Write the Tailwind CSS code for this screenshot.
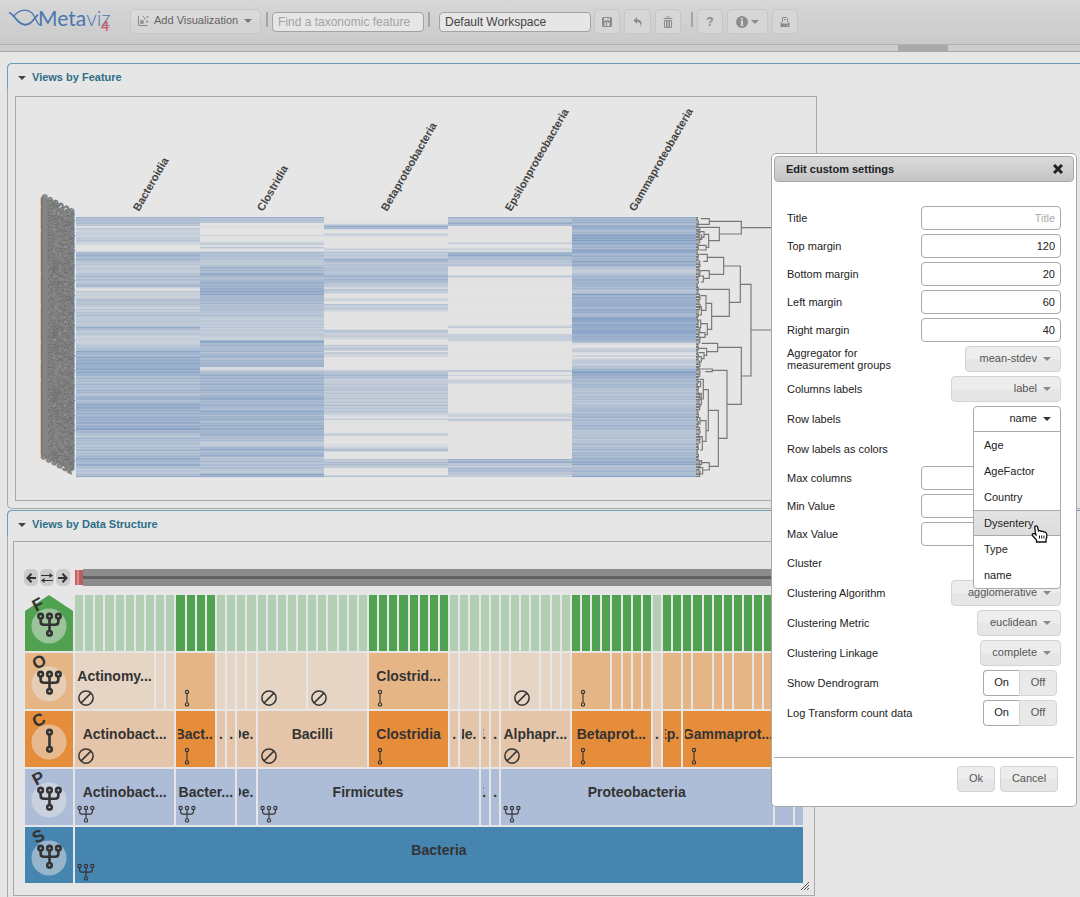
<!DOCTYPE html>
<html lang="en">

<head>
    <meta charset="UTF-8">
    <meta name="viewport" content="width=device-width, initial-scale=1.0">
    <title>Metaviz</title>
    <script src="https://cdn.jsdelivr.net/npm/@tailwindcss/browser@4"></script>
</head>

<body class="bg-[#e6e6e6] text-[#333]">
    <!-- shared icons -->
    <svg class="hidden">
        <symbol id="tree" viewBox="0 0 24 24">
            <g fill="none">
                <circle cx="3.5" cy="4" r="2.2" />
                <circle cx="12" cy="4" r="2.2" />
                <circle cx="20.5" cy="4" r="2.2" />
                <circle cx="12" cy="20.5" r="2.2" />
                <path d="M3.5 6.2V9q0 3.2 3.2 3.2h10.6q3.2 0 3.2-3.2V6.2M12 6.2v12" />
            </g>
        </symbol>
        <symbol id="stem" viewBox="0 0 24 24">
            <g fill="none">
                <circle cx="12" cy="4" r="2.2" />
                <circle cx="12" cy="20.5" r="2.2" />
                <path d="M12 6.2v12" />
            </g>
        </symbol>
        <symbol id="none" viewBox="0 0 24 24">
            <g fill="none">
                <circle cx="12" cy="12" r="9.5" />
                <path d="M5.5 18.5l13-13" />
            </g>
        </symbol>
        <symbol id="caret" viewBox="0 0 8 4">
            <path d="M0 0h8L4 4z" fill="currentColor" />
        </symbol>
    </svg>

    <div class="relative h-screen overflow-hidden font-['Liberation_Sans',Arial,sans-serif] text-[11px]">
        <!-- toolbar -->
        <header class="flex h-[45px] items-start border-b border-[#b0b0b0] bg-linear-to-b from-[#d7d7d7] to-[#cacaca] pl-2 pt-[9px]">
            <svg class="-mt-2 h-8 w-[104px]" viewBox="0 0 104 32" role="img" aria-label="Metaviz 4">
                <g fill="none" stroke="#4a77b0">
                    <path d="M1 11.500C4 12.500 6 15.500 8 18c5 6 11 8 16 2.500l6-7" stroke-width="1.800" />
                    <path d="M5 16C11 8 19 7.500 24 12c4 4 4 10 8 12" stroke-width="1.200" />
                </g>
                <text x="30" y="25" font-family="Lato" font-size="21" fill="#4a77b0">Meta<tspan font-weight="300">viz</tspan></text>
                <text x="93" y="30" font-family="Lato" font-size="14" font-weight="700" fill="#d2606c">4</text>
            </svg>
            <button class="ml-[18px] flex h-[25px] w-[131px] items-center whitespace-nowrap rounded border border-[#c6c6c6] bg-linear-to-b from-[#d9d9d9] from-50% to-[#d4d4d4] to-50% pb-0.5 pl-[7px] text-[11px] text-[#636363]">
                <svg class="mr-1 h-3 w-3" viewBox="0 0 12 12" fill="none" stroke="#888">
                    <path d="M.5 1v9.500h9" />
                    <path d="M3 6h2v2H3zM6 3.500h1.500M8 6.500h2M5 1.500h1M9.500 1v2" stroke-width="1.300" />
                </svg>
                Add Visualization
                <svg class="ml-[6px] h-1 w-2 text-[#777]"><use href="#caret" /></svg>
            </button>
            <span class="ml-[5px] mt-[3px] h-[15px] w-[2px] bg-[#aaa3a3]"></span>
            <input type="text" aria-label="Find a taxonomic feature" placeholder="Find a taxonomic feature"
                class="ml-1 mt-[3px] h-5 w-[152px] rounded border border-[#a3a3a3] bg-[#e6e6e6] px-[5px] text-xs placeholder:text-[#a3a3a3]">
            <span class="ml-1 mt-[3px] h-[15px] w-[2px] bg-[#aaa3a3]"></span>
            <input type="text" aria-label="Workspace" value="Default Workspace"
                class="ml-[9px] mt-[3px] h-5 w-[152px] rounded border border-[#a3a3a3] bg-[#e6e6e6] px-[5px] text-xs text-[#444]">
            <button aria-label="Save" class="ml-[3px] flex h-[25px] w-[26px] items-center justify-center rounded border border-[#c6c6c6] bg-[#d6d6d6]">
                <svg class="h-3 w-3" viewBox="0 0 12 12"><path d="M2 1h8l1 1v8l-1 1H2l-1-1V2z" fill="#8c8c8c" /><path d="M3 2h6v2.500H3zM3.500 6.500h5V10h-5z" fill="#d6d6d6" /><path d="M6.500 2.500h1V4h-1zM5 7h1v3H5z" fill="#8c8c8c" /></svg>
            </button>
            <button aria-label="Undo" class="ml-1 flex h-[25px] w-[27px] items-center justify-center rounded border border-[#c6c6c6] bg-[#d6d6d6]">
                <svg class="h-3 w-3" viewBox="0 0 12 12"><path d="M5 1v2.500c4 0 6 3 3.500 7.500C9 7.500 8 6 5 6v2L1.500 4.500z" fill="#8c8c8c" /></svg>
            </button>
            <button aria-label="Delete" class="ml-1 flex h-[25px] w-[26px] items-center justify-center rounded border border-[#c6c6c6] bg-[#d6d6d6]">
                <svg class="h-3 w-3" viewBox="0 0 12 12" fill="none" stroke="#8c8c8c"><path d="M1.500 2.500h9M4.500 1h3M2.500 4.500h7v7h-7zM4.500 4.500v7M6 4.500v7M7.500 4.500v7" /></svg>
            </button>
            <span class="ml-[10px] mt-[3px] h-[15px] w-[2px] bg-[#aaa3a3]"></span>
            <button aria-label="Help" class="ml-1 flex h-[25px] w-[26px] items-center justify-center rounded border border-[#c6c6c6] bg-[#d6d6d6] text-xs font-bold text-[#8c8c8c]">?</button>
            <button aria-label="About" class="ml-1 flex h-[25px] w-[41px] items-center justify-center gap-[3px] rounded border border-[#c6c6c6] bg-[#d6d6d6] text-[#8c8c8c]">
                <svg class="h-3 w-3" viewBox="0 0 12 12"><circle cx="6" cy="6" r="6" fill="#8c8c8c" /><path d="M5 2h2v1.500H5zM4.500 4.500H7V9h.7v1H4.500V9H5V5.500h-.5z" fill="#d6d6d6" /></svg>
                <svg class="h-1 w-2"><use href="#caret" /></svg>
            </button>
            <button aria-label="Print" class="ml-1 flex h-[25px] w-[26px] items-center justify-center rounded border border-[#c6c6c6] bg-[#d6d6d6]">
                <svg class="h-3 w-3" viewBox="0 0 12 12"><path d="M3.500 6V1.500h4l1 1V6M5 3.500h2" fill="none" stroke="#8c8c8c" /><path d="M1.500 6.500H3V7.500h6v-1h1.500V11h-9z" fill="#8c8c8c" /><path d="M8 9h1v1H8z" fill="#d6d6d6" /></svg>
            </button>
        </header>
        <div class="flex h-[7px] border-b border-[#a9a9a9] bg-[#cdcdcd]">
            <div class="ml-[83.150%] h-full w-[50px] bg-[#a9a9a9]"></div>
        </div>

        <!-- views by feature -->
        <section class="ml-[7px] mt-[11px] rounded-l-[5px] border-b border-l border-[#a9a9a9]">
            <h2 class="-ml-px flex h-[26px] items-center rounded-tl-[5px] border-l border-t border-[#6e9ab5] pl-[10px] pt-0.5 text-[11px] font-bold text-[#2e6e88]">
                <svg class="mr-[6px] h-1 w-2 text-[#444]"><use href="#caret" /></svg>
                Views by Feature
            </h2>
            <div class="pb-[7px] pl-[7px] pt-[7px]">
                <div class="w-full max-w-[802px] border border-[#a9a9a9]">
                    <svg id="heatmap" class="block w-full" viewBox="0 0 800 403"></svg>
                </div>
            </div>
        </section>

        <!-- views by data structure -->
        <section class="ml-[7px] mt-px rounded-l-[5px] border-b border-l border-[#a9a9a9]">
            <h2 class="-ml-px flex h-[26px] items-center rounded-tl-[5px] border-l border-t border-[#6e9ab5] pl-[10px] pt-0.5 text-[11px] font-bold text-[#2e6e88]">
                <svg class="mr-[6px] h-1 w-2 text-[#444]"><use href="#caret" /></svg>
                Views by Data Structure
            </h2>
            <div class="pb-[7px] pl-[5px] pt-[5px]">
                <div class="relative w-full max-w-[802px] border border-[#a9a9a9] px-[11px] pb-3 pt-[27px]">
                    <div class="mb-[9px] flex h-[17px]">
                        <div class="flex w-[50px] gap-0.5">
                            <button aria-label="Back" class="-ml-px flex h-[17px] w-3.5 items-center justify-center rounded-[5px] bg-[#cbcbcb]">
                                <svg class="h-[10px] w-[10px]" viewBox="0 0 10 10" fill="none" stroke="#333" stroke-width="2"><path d="M5.500.8L1.500 5l4 4.200M1.500 5H10" /></svg>
                            </button>
                            <button aria-label="Swap" class="flex h-[17px] w-3.5 items-center justify-center rounded-[5px] bg-[#cbcbcb]">
                                <svg class="h-[10px] w-3" viewBox="0 0 12 10"><path d="M0 2.500h9M3 7.500h9" stroke="#333" stroke-width="1.200" /><path d="M8.500 0L12 2.500 8.500 5zM3.500 5L0 7.500 3.500 10z" fill="#333" /></svg>
                            </button>
                            <button aria-label="Forward" class="flex h-[17px] w-3.5 items-center justify-center rounded-[5px] bg-[#cbcbcb]">
                                <svg class="h-[10px] w-[10px]" viewBox="0 0 10 10" fill="none" stroke="#333" stroke-width="2"><path d="M4.500.8l4 4.200-4 4.200M8.500 5H0" /></svg>
                            </button>
                        </div>
                        <div class="my-px flex w-2 border-l-2 border-[#cf5d5f] bg-[#e38b8d]"><span class="ml-auto h-full w-1 bg-[#b85f60]"></span></div>
                        <div class="flex flex-1 items-center bg-[#8c8c8c]"><span class="h-[3px] w-full bg-[#616161]"></span></div>
                    </div>
                    <div id="taxonomy" class="flex flex-col gap-0.5"></div>
                    <svg class="absolute bottom-[5px] right-[5px] h-2 w-2" viewBox="0 0 8 8" stroke="#555"><path d="M0 8L8 0M3 8l5-5M6 8l2-2" /></svg>
                </div>
            </div>
        </section>

        <!-- settings dialog -->
        <div role="dialog" aria-labelledby="dialogTitle" class="absolute right-[3px] top-[153px] w-[306px] rounded-[5px] border border-[#a9a9a9] bg-white p-0.5 text-[#222]">
            <div class="flex h-[26px] items-center justify-between rounded border border-[#a9a9a9] bg-linear-to-b from-[#dadada] to-[#c4c4c4] pl-[11px] pr-[10px]">
                <h3 id="dialogTitle" class="font-bold">Edit custom settings</h3>
                <button aria-label="Close">
                    <svg class="h-[10px] w-[10px]" viewBox="0 0 10 10" stroke="#222" stroke-width="3"><path d="M1 1l8 8M9 1L1 9" /></svg>
                </button>
            </div>
            <form class="flex flex-col gap-1 pb-[31px] pl-[13px] pr-[13px] pt-6">
                <div id="margins" class="contents"></div>
                <div class="flex h-[26px] items-center justify-between">
                    <label for="aggregator" class="w-32 leading-3">Aggregator for measurement groups</label>
                    <div class="relative">
                        <select id="aggregator" class="block h-[26px] w-24 appearance-none rounded border border-[#d3d3d3] bg-linear-to-b from-[#ededed] from-50% to-[#e6e6e6] to-50% pb-0.5 pr-[23px] text-right text-[#555]"><option>mean-stdev</option></select>
                        <svg class="pointer-events-none absolute right-[10px] top-[11px] h-1 w-2 text-[#888]"><use href="#caret" /></svg>
                    </div>
                </div>
                <div class="flex h-[26px] items-center justify-between">
                    <label for="colLabels">Columns labels</label>
                    <div class="relative">
                        <select id="colLabels" class="block h-[26px] w-[110px] appearance-none rounded border border-[#d3d3d3] bg-linear-to-b from-[#ededed] from-50% to-[#e6e6e6] to-50% pb-0.5 pr-[23px] text-right text-[#555]"><option>label</option></select>
                        <svg class="pointer-events-none absolute right-[10px] top-[11px] h-1 w-2 text-[#888]"><use href="#caret" /></svg>
                    </div>
                </div>
                <div class="flex h-[26px] items-center justify-between">
                    <label for="rowLabels">Row labels</label>
                    <div class="relative">
                        <select id="rowLabels" class="block h-[26px] w-[88px] appearance-none rounded-t border border-[#a9a9a9] bg-white pb-0.5 pr-[23px] text-right text-[#222]"><option>name</option></select>
                        <svg class="pointer-events-none absolute right-[10px] top-[11px] h-1 w-2 text-[#333]"><use href="#caret" /></svg>
                        <!-- open menu -->
                        <ul role="listbox" aria-label="Row labels" class="absolute left-0 top-full z-10 -mt-px w-full rounded-b border border-[#a9a9a9] bg-white leading-[26px]">
                            <li role="option" class="px-[10px]">Age</li>
                            <li role="option" class="px-[10px]">AgeFactor</li>
                            <li role="option" class="px-[10px]">Country</li>
                            <li role="option" class="relative border-y border-[#a9a9a9] bg-linear-to-b from-[#e4e4e4] to-[#dcdcdc] px-[10px] leading-6">
                                Dysentery
                                <svg class="absolute left-[57px] top-3.5 h-[18px] w-[17px]" viewBox="0 0 17 18" fill="#fff" stroke="#111" stroke-width="1.300">
                                    <path d="M4.700 9.500L3.800 2.800Q3.600 1 5 .9t1.700 1.600L7.500 6q1.600-.8 2.500.4 1.500-.7 2.400.5 1.600-.4 2.400.6.900.6 1 2.500.2 2.500-.8 4.500V17H5.500v-2L1.500 10.500Q.8 9.200 2 8.700t2.700.8l.8 1.200" />
                                    <path d="M8.500 10.500v3M10.700 10.500v3M12.900 10.500v3" stroke-width="1" />
                                </svg>
                            </li>
                            <li role="option" class="px-[10px]">Type</li>
                            <li role="option" class="px-[10px]">name</li>
                        </ul>
                    </div>
                </div>
                <fieldset data-toggle="rowColors" data-label="Row labels as colors" class="flex h-[26px] items-center justify-between pr-1"></fieldset>
                <div id="limits" class="contents"></div>
                <fieldset data-toggle="cluster" data-label="Cluster" class="flex h-[26px] items-center justify-between pr-1"></fieldset>
                <div class="flex h-[26px] items-center justify-between">
                    <label for="algorithm">Clustering Algorithm</label>
                    <div class="relative">
                        <select id="algorithm" class="block h-[26px] w-[110px] appearance-none rounded border border-[#d3d3d3] bg-linear-to-b from-[#ededed] from-50% to-[#e6e6e6] to-50% pb-0.5 pr-[23px] text-right text-[#555]"><option>agglomerative</option></select>
                        <svg class="pointer-events-none absolute right-[10px] top-[11px] h-1 w-2 text-[#888]"><use href="#caret" /></svg>
                    </div>
                </div>
                <div class="flex h-[26px] items-center justify-between">
                    <label for="metric">Clustering Metric</label>
                    <div class="relative">
                        <select id="metric" class="block h-[26px] w-[84px] appearance-none rounded border border-[#d3d3d3] bg-linear-to-b from-[#ededed] from-50% to-[#e6e6e6] to-50% pb-0.5 pr-[23px] text-right text-[#555]"><option>euclidean</option></select>
                        <svg class="pointer-events-none absolute right-[10px] top-[11px] h-1 w-2 text-[#888]"><use href="#caret" /></svg>
                    </div>
                </div>
                <div class="flex h-[26px] items-center justify-between">
                    <label for="linkage">Clustering Linkage</label>
                    <div class="relative">
                        <select id="linkage" class="block h-[26px] w-[81px] appearance-none rounded border border-[#d3d3d3] bg-linear-to-b from-[#ededed] from-50% to-[#e6e6e6] to-50% pb-0.5 pr-[23px] text-right text-[#555]"><option>complete</option></select>
                        <svg class="pointer-events-none absolute right-[10px] top-[11px] h-1 w-2 text-[#888]"><use href="#caret" /></svg>
                    </div>
                </div>
                <fieldset data-toggle="dendrogram" data-label="Show Dendrogram" class="flex h-[26px] items-center justify-between pr-1"></fieldset>
                <fieldset data-toggle="logTransform" data-label="Log Transform count data" class="flex h-[26px] items-center justify-between pr-1"></fieldset>
            </form>
            <div class="flex justify-end gap-[5px] border-t border-[#a9a9a9] pb-3 pr-4 pt-2">
                <button class="h-[26px] w-[38px] rounded border border-[#d3d3d3] bg-linear-to-b from-[#ededed] from-50% to-[#e6e6e6] to-50% pb-0.5 text-[#555]">Ok</button>
                <button class="h-[26px] w-[58px] rounded border border-[#d3d3d3] bg-linear-to-b from-[#ededed] from-50% to-[#e6e6e6] to-50% pb-0.5 text-[#555]">Cancel</button>
            </div>
        </div>
    </div>

    <script>
        // ---------- dialog fields ----------
        function inputRow([id, label, value, placeholder]) {
            return `
            <div class="flex h-6 items-center justify-between">
                <label for="${id}">${label}</label>
                <input type="text" id="${id}" value="${value}" placeholder="${placeholder}"
                    class="h-6 w-[140px] rounded border border-[#a9a9a9] bg-white px-[5px] text-right placeholder:text-[#a9a9a9]">
            </div>`;
        }

        document.getElementById('margins').innerHTML = [
            ['title', 'Title', '', 'Title'],
            ['top', 'Top margin', '120', ''],
            ['bottom', 'Bottom margin', '20', ''],
            ['left', 'Left margin', '60', ''],
            ['right', 'Right margin', '40', ''],
        ].map(inputRow).join('');

        document.getElementById('limits').innerHTML = [
            ['maxCols', 'Max columns', '', ''],
            ['minValue', 'Min Value', '', ''],
            ['maxValue', 'Max Value', '', ''],
        ].map(inputRow).join('');

        document.querySelectorAll('fieldset').forEach((el) => {
            const name = el.dataset.toggle;
            el.innerHTML = `
            <span>${el.dataset.label}</span>
            <div class="flex h-[26px] text-center leading-[22px] text-[#555]">
                <label class="w-9 rounded-l border border-r-0 border-[#d3d3d3] bg-[#ebebeb] has-checked:border-[#a9a9a9] has-checked:bg-white has-checked:text-[#222]">
                    <input type="radio" name="${name}" class="sr-only" checked>On</label>
                <label class="w-[38px] rounded-r border border-[#d3d3d3] bg-[#e9e9e9]">
                    <input type="radio" name="${name}" class="sr-only">Off</label>
            </div>`;
        });

        // ---------- heatmap ----------
        // one digit per sample, 0 = no counts, 9 = highest
        const columns = [
            ['Bacteroidia', '6555540332332334321000056765744433433446455356510332324544532434454344434764344233323445587668777886887876565556555665467655878776766776776788665446555545564556776577544445' + '7'],
            ['Clostridia', '74540010000020001330400555545343566657865567767778786666565555544543343434343343328866656656765666761145676766676667656687666765687666765676776676555433467656764464555543587'],
            ['Betaproteobacteria', '000005761003200000000314343476445455445756654431533000220052432' + '000000000000' + '452332100033440422' + '000000000' + '445654' + '33343444343343343534343' + '2103' + '000000000' + '3200000' + '11245' + '00000' + '435543' + '000004'],
            ['Epsilonproteobacteria', '744675' + '00000000000' + '3000305786554444' + '000000' + '41' + '0000000000000000000000000000000' + '23000033332' + '0000000000000000000' + '5002002320000000000000000000' + '1230330000000000000000000000000667343655443'],
            ['Gammaproteobacteria', '76675687656798897876769866766877844334566776766654497786878767876579987897889877867410023310302343345689877666566' + '554554555444555655666565566654' + '4445444564565566576778' + '455565' + '58'],
        ];

        // merges of the dendrogram: x, then y and start x of both branches
        const merges = [
            [1234, 364, 1138, 402, 1168], [1138, 356, 1112, 373, 1105], [1168, 382, 1100, 422, 1136], [1136, 403, 1122, 442, 1128],
            [1122, 395, 1100, 412, 1115], [1115, 405, 1105, 418, 1105], [1128, 436, 1105, 450, 1108], [1263, 553, 1231, 828, 1234],
            [1231, 498, 1181, 607, 1198], [1181, 472, 1132, 523, 1138], [1132, 463, 1108, 484, 1120], [1138, 512, 1108, 535, 1120],
            [1120, 528, 1105, 546, 1112], [1198, 568, 1100, 649, 1145], [1145, 610, 1128, 688, 1132], [1128, 587, 1112, 631, 1114],
            [1132, 671, 1112, 704, 1125], [1112, 660, 1102, 683, 1108], [1114, 620, 1102, 645, 1105], [1125, 698, 1105, 712, 1110],
            [1234, 742, 1163, 913, 1191], [1163, 730, 1115, 755, 1130], [1130, 745, 1105, 766, 1122], [1122, 758, 1105, 776, 1114],
            [1114, 770, 1103, 786, 1106], [1191, 811, 1147, 1015, 1165], [1147, 807, 1100, 815, 1126], [1165, 931, 1135, 1099, 1138],
            [1135, 869, 1120, 992, 1128], [1120, 838, 1108, 897, 1114], [1128, 962, 1108, 1024, 1117], [1114, 880, 1104, 914, 1106],
            [1117, 1010, 1104, 1050, 1110], [1138, 1088, 1115, 1110, 1118], [1112, 845, 1102, 860, 1104], [1110, 953, 1102, 972, 1105],
            [1115, 1082, 1100, 1093, 1104], [1118, 1103, 1102, 1122, 1106],
        ];
        // the closest leaves merge just beside the last column
        for (let i = 0; i < 78; i++) {
            const y = 353 + i * 10;
            merges.push([1102 + (i * i * 3) % 10, y, 1098, y + 6, 1098]);
        }

        function shade(v) {
            const t = v / 9;
            return `rgb(${226 - 98 * t},${226 - 69 * t},${226 - 31 * t})`;
        }

        function renderHeatmap() {
            let str = '';
            columns.forEach(([name, cells], c) => {
                const h = 260 / cells.length;
                [...cells].forEach((v, i) => {
                    str += `<rect x="${c * 124}" y="${i * h}" width="124" height="${h + 0.1}" fill="${shade(+v)}"/>`;
                });
                str += `<text transform="translate(${c * 124 + 63} -5) rotate(-60)" font-size="11" font-weight="700" fill="#444">${name}</text>`;
            });
            for (let i = 0; i < 173; i++) {
                const id = 600000 + (i * 6007) % 9973 * 10 + i % 10;
                str += `<text transform="translate(-4 ${i * 1.5}) rotate(28)" font-size="11" text-anchor="end" fill="#4c4c4c" stroke="#999" stroke-width=".4">${id}</text>`;
            }
            let d = 'M1234 383H1485M1263 690H1485';
            merges.forEach(([x, y1, x1, y2, x2]) => d += `M${x1} ${y1}H${x}V${y2}H${x2}`);
            str += `<path transform="translate(254 -117) scale(.33333)" d="${d}" fill="none" stroke="#777" stroke-width="3.500"/>`;
            document.getElementById('heatmap').innerHTML = `<g transform="translate(60 120)">${str}</g>`;
        }

        // ---------- taxonomy ----------
        const styles = {
            F: 'bg-[#b2cfb3]', f: 'bg-[#50a251]',
            O: 'bg-[#e6d5c5]', o: 'bg-[#e5b586]',
            C: 'bg-[#e5c5aa]', c: 'bg-[#e68d3c]',
            P: 'bg-[#adbdd7]', S: 'bg-[#4785b1]',
        };
        const singles = (n, style) => Array.from({ length: n }, () => [1, style]);

        // cells: leaves covered, style, label, icon
        const levels = [
            ['F', '#50a251', 'tree', [...singles(10, 'F'), ...singles(4, 'f'), ...singles(15, 'F'), ...singles(8, 'f'), ...singles(12, 'F'), ...singles(8, 'f'), [1, 'F'], ...singles(14, 'f')]],
            ['O', '#e5b586', 'tree', [[8, 'O', 'Actinomy...', 'none'], ...singles(2, 'O'), [4, 'o', '', 'stem'], ...singles(4, 'O'), [5, 'O', '', 'none'], [6, 'O', '', 'none'],
                [8, 'o', 'Clostrid...', 'stem'], [1, 'O'], [2, 'O'], ...singles(3, 'O'), [3, 'O', '', 'none'], ...singles(3, 'O'),
                [4, 'o', '', 'stem'], ...singles(4, 'o'), [1, 'O'], [2, 'o'], [1, 'o'], [2, 'o'], ...singles(2, 'o'), [2, 'o'], ...singles(5, 'o')]],
            ['C', '#e68d3c', 'stem', [[10, 'C', 'Actinobact...', 'none'], [4, 'c', 'Bact...', 'stem'], [1, 'C', '...'], [1, 'C', '...'], [2, 'C', 'De...'], [11, 'C', 'Bacilli', 'none'],
                [8, 'c', 'Clostridia', 'stem'], [1, 'C', '...'], [2, 'C', 'Ne...'], [1, 'C', 'F...'], [1, 'C', 'L...'], [7, 'C', 'Alphapr...', 'none'],
                [8, 'c', 'Betaprot...', 'stem'], [1, 'C', '...'], [2, 'c', 'Ep...'], [9, 'c', 'Gammaprot...', 'stem'], [2, 'C'], [1, 'C']]],
            ['P', '#adbdd7', 'tree', [[10, 'P', 'Actinobact...', 'tree'], [6, 'P', 'Bacter...', 'tree'], [2, 'P', 'De...'], [22, 'P', 'Firmicutes', 'tree'],
                [1, 'P', 'F...'], [1, 'P', 'L...'], [27, 'P', 'Proteobacteria', 'tree'], [2, 'P'], [1, 'P']]],
            ['S', '#4785b1', 'tree', [[72, 'S', 'Bacteria', 'tree']]],
        ];

        function renderTaxonomy() {
            document.getElementById('taxonomy').innerHTML = levels.map(([letter, color, icon, cells]) => `
            <div class="flex h-14">
                <svg class="mr-0.5 h-14 w-12 shrink-0" viewBox="0 0 48 56">
                    <path d="${letter === 'F' ? 'M0 16L24 0l24 16v40H0z' : 'M0 0h48v56H0z'}" fill="${color}"/>
                    <circle cx="24" cy="31" r="17.500" fill="#e6e6e6" fill-opacity=".5"/>
                    <use href="#${icon}" x="12" y="17" width="25" height="25" stroke="#333" stroke-width="2.500"/>
                    <text transform="translate(11 17) rotate(-28)" font-size="17" font-weight="700" fill="#333">${letter}</text>
                </svg>
                <div class="-mr-0.5 grid min-w-0 flex-1 grid-cols-[repeat(72,minmax(0,1fr))]">
                    ${cells.map(([n, style, label = '', mark]) => `
                    <div class="min-w-0 pr-0.5" style="grid-column:span ${n}">
                        <div class="h-14 overflow-hidden px-0.5 pt-3 ${styles[style]}">
                            <div class="flex h-[22px] justify-center overflow-hidden text-sm font-bold leading-[22px]"><span>${label}</span></div>
                            ${mark ? `<svg class="mt-0.5 h-[18px] w-[18px]" stroke="#333" stroke-width="${mark === 'none' ? 2 : 1.5}"><use href="#${mark}" width="18" height="18"/></svg>` : ''}
                        </div>
                    </div>`).join('')}
                </div>
            </div>`).join('');
        }

        renderHeatmap();
        renderTaxonomy();
    </script>
</body>

</html>
